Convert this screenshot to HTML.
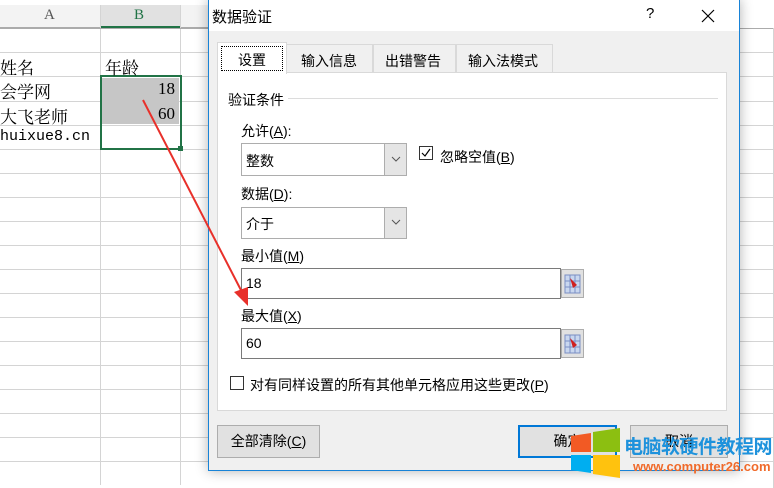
<!DOCTYPE html>
<html><head><meta charset="utf-8"><style>
*{margin:0;padding:0;box-sizing:border-box}
body{width:774px;height:485px;overflow:hidden;background:#fff;position:relative;font-family:"Liberation Sans","Noto Sans CJK SC",sans-serif;}
.a{position:absolute}
.hl{position:absolute;height:1px;background:#d4d4d4}
.vl{position:absolute;width:1px;background:#d4d4d4}
.cell{position:absolute;font-family:"Liberation Serif","Noto Serif CJK SC",serif;font-size:17px;color:#000}
.t{position:absolute;font-size:14px;color:#000;white-space:nowrap}
.combo{position:absolute;background:#fff;border:1px solid #adadad}
.dd{position:absolute;right:0;top:0;bottom:0;width:22px;background:#e5e5e5;border-left:1px solid #adadad}
.inp{position:absolute;background:#fff;border:1px solid #7a7a7a}
.ib{position:absolute;width:23px;height:29px;background:#e1e1e1;border:1px solid #adadad}
.btn{position:absolute;background:#e1e1e1;border:1px solid #adadad;font-size:14px;text-align:center}
u{text-decoration:underline}
</style></head><body>
<div class="a" style="left:0;top:5px;width:210px;height:23px;background:#f3f3f3;border-bottom:1px solid #ababab"></div>
<div class="a" style="left:100px;top:5px;width:81px;height:23px;background:#e1e1e1;border-bottom:2px solid #217346"></div>
<div class="t" style="left:44px;top:7px;color:#555;font-family:'Liberation Serif',serif;font-size:15px">A</div>
<div class="t" style="left:134px;top:7px;color:#217346;font-family:'Liberation Serif',serif;font-size:15px">B</div>
<div class="vl" style="left:100px;top:5px;height:480px"></div>
<div class="vl" style="left:180px;top:5px;height:480px"></div>
<div class="hl" style="left:0;top:52px;width:774px"></div>
<div class="hl" style="left:0;top:76px;width:774px"></div>
<div class="hl" style="left:0;top:101px;width:774px"></div>
<div class="hl" style="left:0;top:125px;width:774px"></div>
<div class="hl" style="left:0;top:149px;width:774px"></div>
<div class="hl" style="left:0;top:173px;width:774px"></div>
<div class="hl" style="left:0;top:197px;width:774px"></div>
<div class="hl" style="left:0;top:221px;width:774px"></div>
<div class="hl" style="left:0;top:245px;width:774px"></div>
<div class="hl" style="left:0;top:269px;width:774px"></div>
<div class="hl" style="left:0;top:293px;width:774px"></div>
<div class="hl" style="left:0;top:317px;width:774px"></div>
<div class="hl" style="left:0;top:341px;width:774px"></div>
<div class="hl" style="left:0;top:365px;width:774px"></div>
<div class="hl" style="left:0;top:389px;width:774px"></div>
<div class="hl" style="left:0;top:413px;width:774px"></div>
<div class="hl" style="left:0;top:437px;width:774px"></div>
<div class="hl" style="left:0;top:461px;width:774px"></div>
<div class="hl" style="left:0;top:28px;width:774px;background:#ababab"></div>
<div class="vl" style="left:773px;top:28px;height:460px"></div>
<div class="a" style="left:102px;top:78px;width:77px;height:46px;background:#c6c6c6"></div>
<div class="a" style="left:100px;top:75px;width:82px;height:75px;border:2px solid #217346"></div>
<div class="a" style="left:178px;top:146px;width:5px;height:5px;background:#217346"></div>
<div class="cell" style="left:0;top:54px">姓名</div>
<div class="cell" style="left:105px;top:54px">年龄</div>
<div class="cell" style="left:0;top:78px">会学网</div>
<div class="cell" style="left:158px;top:79px">18</div>
<div class="cell" style="left:0;top:103px">大飞老师</div>
<div class="cell" style="left:158px;top:104px">60</div>
<div class="cell" style="left:0;top:128px;font-family:'Liberation Mono',monospace;font-size:15px">huixue8.cn</div>
<div class="a" style="left:208px;top:-1px;width:532px;height:472px;background:#f0f0f0;border:1px solid #1883d7;box-shadow:0 0 12px rgba(0,0,0,.3)"></div>
<div class="a" style="left:209px;top:0;width:530px;height:31px;background:#fff"></div>
<div class="t" style="left:212px;top:6px;font-size:15px">数据验证</div>
<div class="t" style="left:646px;top:5px;font-size:15px">?</div>
<svg class="a" style="left:700px;top:8px" width="16" height="16"><path d="M2 2L14 14M14 2L2 14" stroke="#000" stroke-width="1.2"/></svg>
<div class="a" style="left:217px;top:72px;width:510px;height:339px;background:#fff;border:1px solid #d9d9d9"></div>
<div class="a" style="left:286px;top:44px;width:87px;height:29px;background:#f0f0f0;border:1px solid #d9d9d9"></div>
<div class="a" style="left:373px;top:44px;width:83px;height:29px;background:#f0f0f0;border:1px solid #d9d9d9"></div>
<div class="a" style="left:456px;top:44px;width:97px;height:29px;background:#f0f0f0;border:1px solid #d9d9d9"></div>
<div class="a" style="left:217px;top:42px;width:70px;height:32px;background:#fff;border:1px solid #d9d9d9;border-bottom:none"></div>
<div class="a" style="left:221px;top:46px;width:62px;height:25px;border:1px dotted #000"></div>
<div class="t" style="left:238px;top:50px">设置</div>
<div class="t" style="left:301px;top:51px">输入信息</div>
<div class="t" style="left:385px;top:51px">出错警告</div>
<div class="t" style="left:468px;top:51px">输入法模式</div>
<div class="t" style="left:228px;top:90px">验证条件</div>
<div class="a" style="left:288px;top:98px;width:430px;height:1px;background:#dcdcdc"></div>
<div class="t" style="left:241px;top:121px">允许(<u>A</u>):</div>
<div class="combo" style="left:241px;top:143px;width:166px;height:33px"><div class="dd"></div></div>
<div class="t" style="left:246px;top:151px">整数</div>
<svg class="a" style="left:390px;top:155px" width="12" height="8"><path d="M2 2L6 6L10 2" stroke="#555" fill="none"/></svg>
<div class="a" style="left:419px;top:146px;width:14px;height:14px;border:1px solid #333;background:#fff"></div>
<svg class="a" style="left:420px;top:147px" width="12" height="12"><path d="M2 6L5 9L10 2" stroke="#000" fill="none" stroke-width="1.2"/></svg>
<div class="t" style="left:440px;top:147px">忽略空值(<u>B</u>)</div>
<div class="t" style="left:241px;top:184px">数据(<u>D</u>):</div>
<div class="combo" style="left:241px;top:207px;width:166px;height:32px"><div class="dd"></div></div>
<div class="t" style="left:246px;top:214px">介于</div>
<svg class="a" style="left:390px;top:218px" width="12" height="8"><path d="M2 2L6 6L10 2" stroke="#555" fill="none"/></svg>
<div class="t" style="left:241px;top:246px">最小值(<u>M</u>)</div>
<div class="inp" style="left:241px;top:268px;width:320px;height:31px"></div>
<div class="t" style="left:246px;top:275px">18</div>
<div class="ib" style="left:561px;top:269px"></div>
<div class="t" style="left:241px;top:306px">最大值(<u>X</u>)</div>
<div class="inp" style="left:241px;top:328px;width:320px;height:31px"></div>
<div class="t" style="left:246px;top:335px">60</div>
<div class="ib" style="left:561px;top:329px"></div>
<svg class="a" style="left:564px;top:273px" width="17" height="22"><rect x="1" y="2" width="15" height="18" fill="#c9d7ef" stroke="#7a8fc4"/><path d="M1 8H16M1 14H16M6 2V20M11 2V20" stroke="#7a8fc4"/><path d="M6 5L13 12L9 15Z" fill="#d02020"/></svg>
<svg class="a" style="left:564px;top:333px" width="17" height="22"><rect x="1" y="2" width="15" height="18" fill="#c9d7ef" stroke="#7a8fc4"/><path d="M1 8H16M1 14H16M6 2V20M11 2V20" stroke="#7a8fc4"/><path d="M6 5L13 12L9 15Z" fill="#d02020"/></svg>
<div class="a" style="left:230px;top:376px;width:14px;height:14px;border:1px solid #333;background:#fff"></div>
<div class="t" style="left:250px;top:375px">对有同样设置的所有其他单元格应用这些更改(<u>P</u>)</div>
<div class="btn" style="left:217px;top:425px;width:103px;height:33px;line-height:31px">全部清除(<u>C</u>)</div>
<div class="btn" style="left:518px;top:425px;width:99px;height:33px;line-height:29px;border:2px solid #0078d7">确定</div>
<div class="btn" style="left:630px;top:425px;width:98px;height:33px;line-height:31px">取消</div>
<svg class="a" style="left:0;top:0" width="774" height="485"><line x1="143" y1="100" x2="244" y2="296" stroke="#e8302a" stroke-width="2"/><path d="M248 306L234 292L248 287Z" fill="#e8302a"/></svg>
<svg class="a" style="left:568px;top:428px" width="56" height="52"><path d="M3 8L23 5V24H3Z" fill="#f25a24"/><path d="M25 4L52 0V24H25Z" fill="#8cbf11"/><path d="M3 27H23V45L3 42Z" fill="#00aef0"/><path d="M25 27H52V50L25 46Z" fill="#ffc20e"/></svg>
<div class="t" style="left:624px;top:432px;font-size:19px;font-weight:bold;color:#1e92dc;letter-spacing:-0.5px">电脑软硬件教程网</div>
<div class="t" style="left:633px;top:459px;font-size:13px;font-weight:bold;color:#f06a2a">www.computer26.com</div>
</body></html>
